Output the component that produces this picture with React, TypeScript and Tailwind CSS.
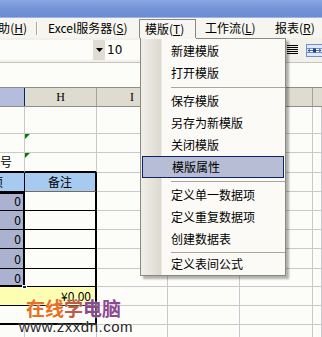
import React from 'react';

const font = { fontFamily: '"Noto Sans CJK SC", "DejaVu Sans", sans-serif' };

// column widths: G, H, I, J, K, L
const COLS = ['w-[25px]', 'w-[72px]', 'w-[71px]', 'w-[72px]', 'w-[73px]', 'w-[9px]'];

type CellProps = { className?: string; children?: React.ReactNode };

const Cell: React.FC<CellProps> = ({ className = '', children }) => (
  <div className={`shrink-0 h-full flex items-center overflow-hidden whitespace-nowrap ${className}`}>{children}</div>
);

const Tri: React.FC = () => (
  <div className="absolute left-0 top-0 w-0 h-0 border-t-[5px] border-t-[#008000] border-r-[5px] border-r-transparent" />
);

const MenuItem: React.FC<{ label: string; active?: boolean; h?: string }> = ({ label, active, h = 'h-[22px]' }) =>
  active ? (
    <div className={`${h} mx-[1px] flex items-center pl-[29px] bg-[#b6bdd4] border border-[#0a246a] text-[12px] text-black`}>
      {label}
    </div>
  ) : (
    <div className={`${h} flex items-center pl-[30px] text-[12px] text-black`}>{label}</div>
  );

const Sep: React.FC<{ h?: string }> = ({ h = 'h-[6px]' }) => (
  <div className={`${h} flex items-center pl-[30px]`}>
    <div className="h-px w-full bg-[#a8a69d]" />
  </div>
);

const Top: React.FC<{ text: string; k: string }> = ({ text, k }) => (
  <span>
    {text}(<span className="underline">{k}</span>)
  </span>
);

export default function App() {
  const grid = 'border-r border-b border-[#cbc7cf] bg-[#fcfcf8]';
  const gSel = 'border-r border-b border-black bg-[#aab2cf] justify-end pr-[3px]';
  const hBody = 'border-r-2 border-r-black border-b border-b-black bg-[#fcfcf8]';

  const bodyRows = [
    { h: 'h-[19px]' },
    { h: 'h-[19px]' },
    { h: 'h-[19px]' },
    { h: 'h-[20px]' },
    { h: 'h-[18px]' },
  ];

  return (
    <div className="relative w-[322px] h-[337px] overflow-hidden bg-[#fcfcf8] text-black" style={font}>
      {/* title bar */}
      <div className="h-[18px] bg-gradient-to-b from-[#8ba7e0] via-[#7394d8] to-[#6a8cd4] border-b border-[#9db3e4]" />

      {/* menu bar */}
      <div className="h-[20px] flex items-end bg-[#f6f5ef] text-[12px] leading-none">
        <div className="w-[36px] h-full flex items-center justify-end pr-[9px] overflow-hidden whitespace-nowrap">
          <Top text="帮助" k="H" />
        </div>
        <div className="h-full flex items-center">
          <div className="w-px h-[13px] bg-[#a9a79e]" />
          <div className="w-px h-[13px] bg-white" />
        </div>
        <div className="w-[101px] h-full flex items-center pl-[10px] whitespace-nowrap">
          <Top text="Excel服务器" k="S" />
        </div>
        <div className="w-[57px] h-[19px] flex items-center pl-[5px] border-l border-t border-r border-[#8b887e] bg-[#f7f6f2] whitespace-nowrap">
          <Top text="模版" k="T" />
        </div>
        <div className="w-[79px] h-full flex items-center pl-[9px] whitespace-nowrap">
          <Top text="工作流" k="L" />
        </div>
        <div className="h-full flex items-center whitespace-nowrap">
          <Top text="报表" k="R" />
        </div>
      </div>

      {/* toolbar */}
      <div className="h-[24px] flex items-center bg-[#f1f0e9]">
        <div className="w-[93px] h-[20px] bg-[#fcfcf9]" />
        <div className="w-[12px] h-[20px] bg-[#dedcd3] flex items-center justify-center">
          <svg width="7" height="4" viewBox="0 0 7 4">
            <path d="M0 0h7L3.5 4z" fill="#000" />
          </svg>
        </div>
        <div className="w-[40px] h-[20px] bg-[#fcfcf9] flex items-center pl-[2px] text-[12px]" style={{ fontFamily: '"DejaVu Sans", sans-serif' }}>
          10
        </div>
        <div className="flex-1" />
        <svg width="11" height="10" viewBox="0 0 11 10" className="mr-[8px]">
          <path d="M0 0.5h11M0 2.5h11M0 4.5h11M0 6.5h11M0 8.5h11" stroke="#000" strokeWidth="1" />
        </svg>
        <svg width="17" height="13" viewBox="0 0 17 13" className="mr-[-1px]">
          <rect x="0.5" y="0.5" width="16" height="12" fill="#dfe8f7" stroke="#6f8fc8" />
          <path d="M0 4.5h17M0 8.5h17" stroke="#6f8fc8" />
          <rect x="2" y="5" width="13" height="3" fill="#fff" />
          <path d="M2 6.5h13M2 6.5l2-1.5M2 6.5l2 1.5M15 6.5l-2-1.5M15 6.5l-2 1.5" stroke="#1f3f90" strokeWidth="0.8" />
          <rect x="7" y="4.5" width="3" height="4" fill="#1f3f90" />
        </svg>
      </div>

      {/* formula area */}
      <div className="h-[25px] border-t border-[#c5c3ba] bg-[#fcfcf9]" />

      {/* sheet */}
      <div className="relative border-t border-[#8f8d84] text-[12px]">
        {/* column headers */}
        <div className="h-[19px] flex border-b border-[#8f8d84]" style={{ fontFamily: '"Liberation Serif", "Noto Sans CJK SC", serif' }}>
          <Cell className={`${COLS[0]} bg-[#b4bddb] border-r border-[#0a246a]`} />
          <Cell className={`${COLS[1]} bg-[#dedbd0] border-r border-[#a3a196] justify-center`}>H</Cell>
          <Cell className={`${COLS[2]} bg-[#dedbd0] border-r border-[#a3a196] justify-center`}>I</Cell>
          <Cell className={`${COLS[3]} bg-[#dedbd0] border-r border-[#a3a196] justify-center`}>J</Cell>
          <Cell className={`${COLS[4]} bg-[#dedbd0] border-r border-[#a3a196] justify-center`}>K</Cell>
          <Cell className={`${COLS[5]} bg-[#dedbd0]`} />
        </div>

        {/* row 1 */}
        <div className="h-[27px] flex">
          {COLS.map((c, i) => (
            <Cell key={i} className={`${c} ${grid}`} />
          ))}
        </div>
        {/* row 2 */}
        <div className="h-[19px] flex">
          <Cell className={`${COLS[0]} ${grid}`} />
          <Cell className={`${COLS[1]} ${grid} relative`}>
            <Tri />
          </Cell>
          {COLS.slice(2).map((c, i) => (
            <Cell key={i} className={`${c} ${grid}`} />
          ))}
        </div>
        {/* row 3 */}
        <div className="h-[20px] flex">
          <Cell className={`${COLS[0]} border-r border-[#cbc7cf] border-b-2 border-b-black bg-[#fcfcf8]`}>
            <span className="ml-[-12px]">编号</span>
          </Cell>
          <Cell className={`${COLS[1]} border-r border-[#cbc7cf] border-b-2 border-b-black bg-[#fcfcf8] relative`}>
            <Tri />
          </Cell>
          {COLS.slice(2).map((c, i) => (
            <Cell key={i} className={`${c} ${grid}`} />
          ))}
        </div>
        {/* table header */}
        <div className="h-[19px] flex">
          <Cell className={`${COLS[0]} border-r border-b border-black bg-[#a6caf0]`}>
            <span className="ml-[-9px]">项</span>
          </Cell>
          <Cell className={`${COLS[1]} border-r-2 border-r-black border-b border-b-[#7a6a50] bg-[#a6caf0] justify-center`}>
            备注
          </Cell>
          {COLS.slice(2).map((c, i) => (
            <Cell key={i} className={`${c} ${grid}`} />
          ))}
        </div>
        {/* body rows */}
        {bodyRows.map((r, ri) => (
          <div key={ri} className={`${r.h} flex`}>
            <Cell className={`${COLS[0]} ${gSel}`}>0</Cell>
            <Cell className={`${COLS[1]} ${hBody}`} />
            {COLS.slice(2).map((c, i) => (
              <Cell key={i} className={`${c} ${grid}`} />
            ))}
          </div>
        ))}
        {/* total row */}
        <div className="h-[19px] flex">
          <Cell className="w-[97px] border-r-2 border-r-black border-b border-b-black bg-[#fefeb2] justify-end pr-[4px]">
            ¥0.00
          </Cell>
          {COLS.slice(2).map((c, i) => (
            <Cell key={i} className={`${c} ${grid}`} />
          ))}
        </div>
        <div className="h-[19px] flex">
          <Cell className="w-[97px] border-r-2 border-r-black border-b-2 border-b-black bg-[#fcfcf8]" />
          {COLS.slice(2).map((c, i) => (
            <Cell key={i} className={`${c} ${grid}`} />
          ))}
        </div>
        <div className="h-[19px] flex">
          {COLS.map((c, i) => (
            <Cell key={i} className={`${c} ${grid}`} />
          ))}
        </div>

        {/* selection outline */}
        <div className="absolute left-[-2px] top-[104px] w-[27px] h-[95px] border-2 border-black pointer-events-none" />
        <div className="absolute left-[22px] top-[197px] w-[5px] h-[4px] bg-[#0a246a] border border-white" />
      </div>

      {/* dropdown menu */}
      <div
        className="absolute left-[140px] top-[38px] w-[146px] py-[1px] border border-[#8b887e] bg-[linear-gradient(to_right,#f1efe9_0px,#dcd9cf_20px,#fbfaf6_21px)] shadow-[3px_3px_2px_rgba(0,0,0,0.3)]"
      >
        <MenuItem label="新建模版" />
        <MenuItem label="打开模版" />
        <Sep />
        <MenuItem label="保存模版" />
        <MenuItem label="另存为新模版" />
        <MenuItem label="关闭模版" />
        <MenuItem label="模版属性" active />
        <Sep />
        <MenuItem label="定义单一数据项" />
        <MenuItem label="定义重复数据项" />
        <MenuItem label="创建数据表" />
        <Sep h="h-[4px]" />
        <MenuItem label="定义表间公式" h="h-[20px]" />
      </div>
      {/* cover top border of menu under pressed item */}
      <div className="absolute left-[141px] top-[38px] w-[55px] h-px bg-[#f7f6f2]" />

      {/* watermark */}
      <div className="absolute left-[26px] top-[298px] text-[19px] leading-none font-bold whitespace-nowrap pointer-events-none [text-shadow:0_0_2px_#fff]">
        <span className="text-[#e8701e]">在线</span>
        <span className="text-[#c05a48]">学</span>
        <span className="text-[#8a4a90]">电脑</span>
      </div>
      <div
        className="absolute left-[19px] top-[319px] text-[15px] leading-none tracking-[0.5px] text-[#2a2a2a] [text-shadow:0_0_2px_#fff]"
        style={{ fontFamily: '"Liberation Sans", Arial, sans-serif' }}
      >
        www.zxxdn.com
      </div>
    </div>
  );
}
